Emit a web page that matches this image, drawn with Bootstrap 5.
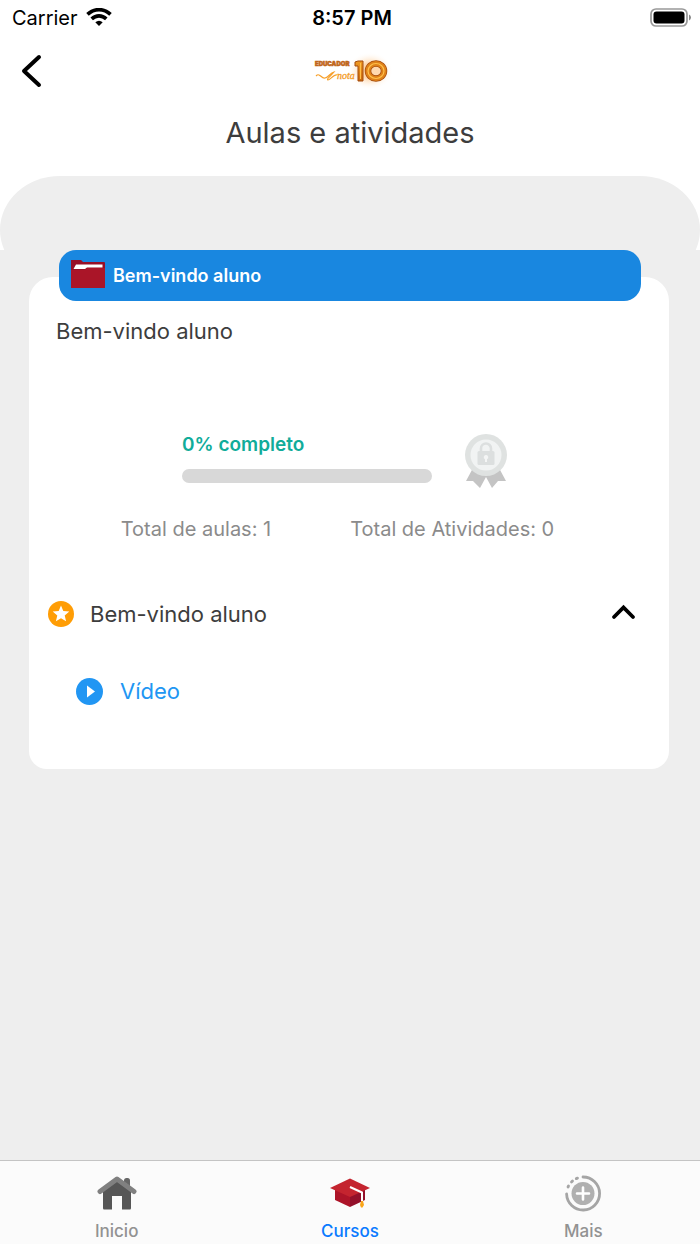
<!DOCTYPE html>
<html lang="pt-BR">
<head>
<meta charset="utf-8">
<meta name="viewport" content="width=device-width, initial-scale=1">
<title>Aulas e atividades</title>
<link href="https://cdn.jsdelivr.net/npm/bootstrap@5.3.0/dist/css/bootstrap.min.css" rel="stylesheet">
<style>
  body { font-family: Inter, "Liberation Sans", sans-serif; color: #3d3d3d; background: #fff; }
  svg { display: block; flex: none; }
  .status-bar { height: 36px; padding: 0 8px 0 12px; font-size: 20px; line-height: 24px; color: #000; }
  .top-bar { height: 70px; }
  .back-btn { left: 20px; }
  .screen-title { font-size: 29px; line-height: 36px; padding: 9px 0 25px; }
  .dome { height: 74px; overflow: hidden; }
  .dome-shape { height: 108px; background: #eee; border-radius: 60px / 54px; }
  .content-area { background: #eee; padding: 0 31px 0 29px; }
  .course-tab { height: 51px; margin: 0 28px 0 30px; padding: 0 12px 4px; gap: 8px; background: #1987e0; border-radius: 17px; color: #fff; font-size: 18px; line-height: 24px; z-index: 1; }
  .course-tab span { padding-top: 4px; }
  .course-panel { margin-top: -24px; padding: 40px 28px 64px 19px; background: #fff; border-radius: 24px 24px 18px 18px; }
  .item-text { font-size: 22px; line-height: 28px; }
  .course-intro { padding-left: 8px; margin-bottom: 88px; }
  .progress-row { gap: 33px; margin-bottom: 26px; }
  .percent { color: #11ac9a; font-size: 19px; line-height: 24px; margin-bottom: 12px; }
  .course-progress { width: 250px; height: 14px; background: #d8d8d8; border-radius: 7px; }
  .totals { gap: 79px; color: #8b8b8b; font-size: 20px; line-height: 28px; padding-right: 14px; margin-bottom: 57px; }
  .module-btn { gap: 16px; color: #3d3d3d; }
  .lesson-link { gap: 17px; padding: 49px 0 0 28px; color: #2196f3; }
  .tab-bar { background: #fbfbfb; border-top: 1px solid #c4c4c4; height: 84px; }
  .tab-item { color: #929292; font-size: 17px; line-height: 20px; padding-top: 12px; gap: 8px; }
  .tab-item.current { color: #0a7aff; }
</style>
</head>
<body class="d-flex flex-column min-vh-100">
<header>
  <div class="status-bar row g-0 align-items-center">
    <div class="col d-flex align-items-center gap-2">
      <span>Carrier</span>
      <svg width="26" height="20" viewBox="0 0 26 20" fill="none" stroke="#000" stroke-width="3.6" aria-label="Wi-Fi"><path d="M1.500 6.400C8 0 18 0 24.500 6.400M5.700 10.900C10 6.800 16 6.800 20.300 10.900"/><path d="M9.300 14.300Q13 11.200 16.700 14.300L13 18Z" fill="#000" stroke="none"/></svg>
    </div>
    <div class="col-auto fw-semibold">8:57 PM</div>
    <div class="col d-flex justify-content-end">
      <svg width="42" height="20" viewBox="0 0 42 20" aria-label="Bateria"><rect x="1" y="1" width="36" height="17" rx="5" fill="none" stroke="#999" stroke-width="1.700"/><rect x="3.500" y="3.500" width="31" height="12" rx="3" fill="#000"/><path d="M39 6.500Q41 7.500 41 9.500T39 12.500Z" fill="#888"/></svg>
    </div>
  </div>
  <div class="top-bar position-relative d-flex justify-content-center align-items-center">
    <button class="back-btn btn border-0 p-0 position-absolute" type="button" aria-label="Voltar">
      <svg width="23" height="34" viewBox="0 0 23 34" fill="none" stroke="#000" stroke-width="4" stroke-linecap="round" stroke-linejoin="round"><path d="M19 3L4 17L19 31"/></svg>
    </button>
    <svg width="88" height="40" viewBox="-1 -1 88 40" role="img" aria-label="Educador nota 10">
      <defs><radialGradient id="glow"><stop offset=".4" stop-color="#ffc88c" stop-opacity=".7"/><stop offset="1" stop-color="#fff" stop-opacity="0"/></radialGradient><linearGradient id="gold" x2="0" y2="1"><stop stop-color="#ef9a22"/><stop offset="1" stop-color="#c9680f"/></linearGradient></defs>
      <ellipse cx="63" cy="19" rx="23" ry="19" fill="url(#glow)"/>
      <text x="8" y="14" font-family="Inter" font-size="6" font-weight="900" fill="#c0651a" stroke="#c0651a" stroke-width=".6">EDUCADOR</text>
      <path d="M9 24C13 20 14 27 18 26C22 25 23 21 27 20C24 24 19 27 21 28C23 28 27 22 30 23" fill="none" stroke="#f7a02b" stroke-width="1.200"/>
      <text x="30" y="27" font-family="Liberation Serif" font-style="italic" font-size="10" fill="#f49a24" stroke="#f49a24" stroke-width=".3">nota</text>
      <path d="M48 10L51 9H56V29H51V14H48Z" fill="url(#gold)" stroke="#a34a0c"/>
      <path d="M53.500 11V27" stroke="#ffc04a"/>
      <ellipse cx="69" cy="19" rx="8" ry="7.500" fill="none" stroke="#a34a0c" stroke-width="6.500"/>
      <ellipse cx="69" cy="19" rx="8" ry="7.500" fill="none" stroke="#df8119" stroke-width="5"/>
      <ellipse cx="69" cy="19" rx="8" ry="7.500" fill="none" stroke="#ffc04a" stroke-width="1.200"/>
    </svg>
  </div>
  <h1 class="screen-title text-center fw-normal m-0">Aulas e atividades</h1>
  <div class="dome"><div class="dome-shape"></div></div>
</header>

<main class="content-area flex-grow-1">
  <div class="course-tab position-relative d-flex align-items-center fw-semibold">
    <svg width="34" height="30" viewBox="0 0 34 30" aria-hidden="true"><path d="M0 1H10L12 3H33Q34 3 34 4V28Q34 29 33 29H0Z" fill="#970f27"/><path d="M0 11H14L16 9H34V29H0Z" fill="#aa1528"/><path d="M2.500 10L5 5.500H31.500V8.500H16L14 10Z" fill="#fff"/></svg>
    <span>Bem-vindo aluno</span>
  </div>
  <section class="course-panel">
    <p class="course-intro item-text">Bem-vindo aluno</p>
    <div class="progress-row d-flex justify-content-center align-items-start">
      <div>
        <div class="percent fw-semibold" id="percent">0% completo</div>
        <div class="progress course-progress" role="progressbar" aria-labelledby="percent" aria-valuenow="0" aria-valuemin="0" aria-valuemax="100"><div class="progress-bar" style="width: 0%"></div></div>
      </div>
      <svg width="42" height="56" viewBox="0 0 42 56" role="img" aria-label="Certificado bloqueado">
        <path d="M8 35L1 48L8 48L15 55L21 44L27 55L33 48H41L34 35Z" fill="#c4c4c4"/>
        <circle cx="21" cy="22" r="21" fill="#dfe2e1"/><circle cx="21" cy="22" r="15.500" fill="#f1f3f3"/>
        <path d="M16 19V15.500A5 5 0 0 1 26 15.500V19" fill="none" stroke="#dcdfdf" stroke-width="2.600"/><rect x="12.500" y="18" width="17" height="14" rx="1.500" fill="#dcdfdf"/><path d="M21 22a2.200 2.200 0 0 1 1 4.200V29H20V26.200A2.200 2.200 0 0 1 21 22Z" fill="#f4f5f5"/>
      </svg>
    </div>
    <div class="totals d-flex justify-content-center">
      <span>Total de aulas: 1</span>
      <span>Total de Atividades: 0</span>
    </div>
    <button class="module-btn item-text btn border-0 p-0 w-100 d-flex align-items-center text-start" type="button" data-bs-toggle="collapse" data-bs-target="#lessons" aria-expanded="true" aria-controls="lessons">
      <svg width="26" height="26" viewBox="0 0 26 26" aria-hidden="true"><circle cx="13" cy="13" r="13" fill="#ff9d05"/><path d="M13 4.500L15.300 10L21.300 10.500L16.700 14.400L18.100 20.300L13 17.200L7.900 20.300L9.300 14.400L4.700 10.500L10.700 10Z" fill="#fff"/></svg>
      <span class="flex-grow-1">Bem-vindo aluno</span>
      <svg width="36" height="24" viewBox="0 0 36 24" fill="none" stroke="#000" stroke-width="3.800" aria-hidden="true"><path d="M9 15L18.500 5.500L28 15" stroke-linecap="round"/></svg>
    </button>
    <div class="collapse show" id="lessons">
      <a href="#video" class="lesson-link item-text d-flex align-items-center text-decoration-none">
        <svg width="27" height="27" viewBox="0 0 27 27" aria-hidden="true"><circle cx="13.500" cy="13.500" r="13.500" fill="#2196f3"/><path d="M11 7.500L19 13.500L11 19.500Z" fill="#fff"/></svg>
        <span>Vídeo</span>
      </a>
    </div>
  </section>
</main>

<nav class="tab-bar row g-0 text-center fw-medium" aria-label="Principal">
  <a href="#inicio" class="tab-item col d-flex flex-column align-items-center text-decoration-none">
    <svg width="40" height="40" viewBox="0 0 40 40" aria-hidden="true"><rect x="27" y="5" width="6" height="14" rx="2.500" fill="#666"/><path d="M6 16L20 7L34 16V35Q34 36.500 33 36.500H25V23H15V36.500H7Q6 36.500 6 35Z" fill="#565656"/><path d="M3 18.500L20 6L37 18.500" fill="none" stroke="#808080" stroke-width="5" stroke-linecap="round" stroke-linejoin="round"/></svg>
    <span>Inicio</span>
  </a>
  <a href="#cursos" class="tab-item current col d-flex flex-column align-items-center text-decoration-none" aria-current="page">
    <svg width="40" height="40" viewBox="0 0 40 40" aria-hidden="true"><path d="M5 15L20 21V34L5 27Z" fill="#ad1428"/><path d="M20 21L35 15V27L20 34Z" fill="#93102a"/><path d="M0 15L20 5.500L40 15L20 24Z" fill="#c4242f"/><path d="M20 14L32 19.500V30" fill="none" stroke="#fff" stroke-width="2"/><path d="M31 28H33L34 32L32.500 34.500H31L30 32Z" fill="#f9a51a"/></svg>
    <span>Cursos</span>
  </a>
  <a href="#mais" class="tab-item col d-flex flex-column align-items-center text-decoration-none">
    <svg width="40" height="40" viewBox="0 0 40 40" fill="none" stroke="#a5a5a5" stroke-width="2.800" stroke-linecap="round" aria-hidden="true"><path d="M20 4A16.500 16.500 0 1 1 3.600 21"/><path d="M5 14L5.500 13M8.500 9L9.500 8M13.300 5.600L14.500 5.100"/><circle cx="20" cy="20.500" r="11.500" fill="#b0b0b0" stroke="none"/><path d="M20 14.500V26.500M14 20.500H26" stroke="#fff" stroke-width="2.600"/></svg>
    <span>Mais</span>
  </a>
</nav>
<script src="https://cdn.jsdelivr.net/npm/bootstrap@5.3.0/dist/js/bootstrap.bundle.min.js"></script>
</body>
</html>
